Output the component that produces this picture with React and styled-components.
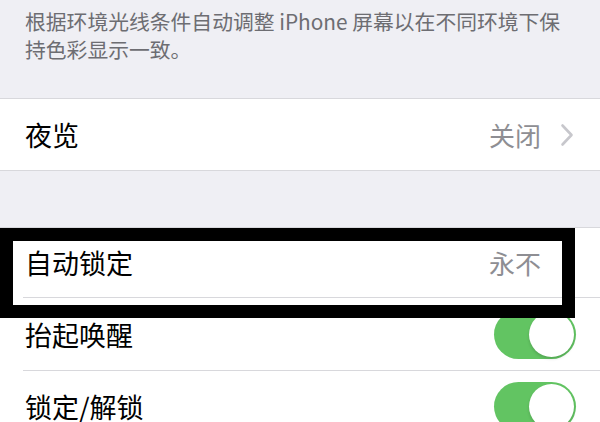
import React from 'react';
import styled, { createGlobalStyle } from 'styled-components';

const GlobalStyle = createGlobalStyle`
  body {
    margin: 0;
    background: #efeff4;
    font-family: "Noto Sans CJK SC", "Noto Sans", sans-serif;
  }
`;

const Page = styled.div`
  position: relative;
  width: 600px;
  height: 422px;
  overflow: hidden;
  background: #efeff4;
`;

const Footnote = styled.p`
  margin: 0;
  height: 98px;
  box-sizing: border-box;
  padding: 7px 20px 0 25px;
  font-size: 20.8px;
  line-height: 28px;
  color: #6d6d72;
  white-space: nowrap;
`;

const Group = styled.div`
  background: #fff;
  border-top: 1px solid #d8d8dc;
  border-bottom: 1px solid #d8d8dc;
  margin-bottom: ${(p) => p.gap || 0}px;
`;

const Row = styled.div`
  display: flex;
  align-items: center;
  height: ${(p) => p.h || 71}px;
  padding-left: 25px;
  padding-right: 24px;
  box-sizing: border-box;

  & + & {
    border-top: 1px solid #d8d8dc;
    margin-left: 23px;
    padding-left: 2px;
  }
`;

const Label = styled.span`
  flex: 1;
  font-size: 27px;
  color: #000;
`;

const Value = styled.span`
  font-size: 26px;
  color: #8e8e93;
  margin-right: ${(p) => (p.chevron ? 19 : 35)}px;
`;

const Chevron = styled.svg`
  width: 14px;
  height: 24px;
  margin-right: 2px;
`;

const Toggle = styled.div`
  width: 82px;
  height: 49px;
  border-radius: 25px;
  background: #62c462;
  position: relative;
  flex-shrink: 0;
`;

const Knob = styled.div`
  position: absolute;
  right: 2px;
  top: 2px;
  width: 45px;
  height: 45px;
  border-radius: 50%;
  background: #fff;
  box-shadow: 0 2px 3px rgba(0, 0, 0, 0.15);
`;

const Highlight = styled.div`
  position: absolute;
  left: 0;
  top: 228px;
  width: 575px;
  height: 90px;
  box-sizing: border-box;
  border: 13px solid #000;
  pointer-events: none;
`;

export default function App() {
  return (
    <>
      <GlobalStyle />
      <Page>
        <Footnote>
          根据环境光线条件自动调整 iPhone 屏幕以在不同环境下保
          <br />
          持色彩显示一致。
        </Footnote>

        <Group gap={56}>
          <Row>
            <Label>夜览</Label>
            <Value chevron>关闭</Value>
            <Chevron viewBox="0 0 14 24">
              <path d="M2.5 2.5 L11.5 12 L2.5 21.5" fill="none" stroke="#c7c7cc" strokeWidth="2.6" strokeLinecap="round" strokeLinejoin="round" />
            </Chevron>
          </Row>
        </Group>

        <Group>
          <Row h={69}>
            <Label>自动锁定</Label>
            <Value>永不</Value>
          </Row>
          <Row h={73}>
            <Label>抬起唤醒</Label>
            <Toggle><Knob /></Toggle>
          </Row>
          <Row>
            <Label>锁定/解锁</Label>
            <Toggle><Knob /></Toggle>
          </Row>
        </Group>

        <Highlight />
      </Page>
    </>
  );
}
